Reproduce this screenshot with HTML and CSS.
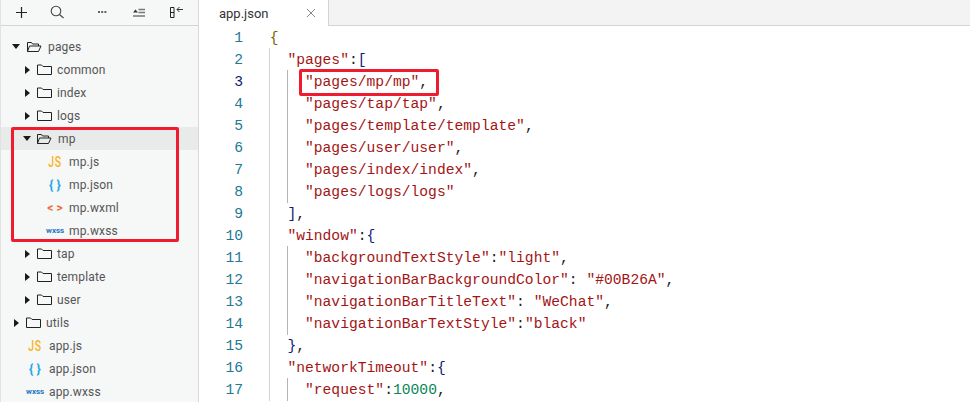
FILE: index.html
```html
<!DOCTYPE html>
<html lang="en">
<head>
<meta charset="utf-8">
<title>app.json</title>
<link rel="stylesheet" href="styles.css">
</head>
<body>
<div class="app">
  <aside class="sidebar">
    <div class="toolbar">
      <svg class="tool" width="36" height="25" viewBox="0 0 36 25"><path d="M20.500 7v11M15 12.500h11" fill="none" stroke="#222" stroke-width="1.200"/></svg>
      <svg class="tool" width="38" height="25" viewBox="0 0 38 25"><circle cx="19" cy="11" r="4.800" fill="none" stroke="#444" stroke-width="1.100"/><path d="M22.500 14.500l4 3.500" fill="none" stroke="#444" stroke-width="1.100"/></svg>
      <svg class="tool" width="44" height="25" viewBox="0 0 44 25"><path d="M23 12h2M26.200 12h2M29.400 12h2" fill="none" stroke="#333" stroke-width="1.600"/></svg>
      <svg class="tool" width="36" height="25" viewBox="0 0 36 25"><path d="M14 12.500l2.500-3 2.500 3z" fill="#333"/><path d="M19.500 9.500h6.500M19.500 12.500h6.500M14 16h12" fill="none" stroke="#777" stroke-width="1.400"/></svg>
      <svg class="tool" width="38" height="25" viewBox="0 0 38 25"><path d="M15.500 7.500h3.500v10h-3.500zM15.500 12.500h3.500" fill="none" stroke="#222" stroke-width="1"/><path d="M28 9.500h-6M24.500 7l-2.500 2.500 2.500 2.500" fill="none" stroke="#333" stroke-width="1"/></svg>
    </div>
    <ul class="tree">
      <li class="row d0"><i class="arrow down"></i><svg class="folder open" width="16" height="12" viewBox="0 0 16 12"><path d="M1.500 10.500v-9h4l1 1.500h6v2M1.500 10.500l2-5.500h11.500l-2.500 5.500z" fill="none" stroke="#222" stroke-width="1"/></svg><span class="label">pages</span></li>
      <li class="row d1"><i class="arrow right"></i><svg class="folder" width="15" height="12" viewBox="0 0 15 12"><path d="M.5 10.500v-9.500h4l1.500 1.500h8.500v8z" fill="none" stroke="#222" stroke-width="1"/></svg><span class="label">common</span></li>
      <li class="row d1"><i class="arrow right"></i><svg class="folder" width="15" height="12" viewBox="0 0 15 12"><path d="M.5 10.500v-9.500h4l1.500 1.500h8.500v8z" fill="none" stroke="#222" stroke-width="1"/></svg><span class="label">index</span></li>
      <li class="row d1"><i class="arrow right"></i><svg class="folder" width="15" height="12" viewBox="0 0 15 12"><path d="M.5 10.500v-9.500h4l1.500 1.500h8.500v8z" fill="none" stroke="#222" stroke-width="1"/></svg><span class="label">logs</span></li>
      <li class="row d1 selected"><i class="arrow down"></i><svg class="folder open" width="16" height="12" viewBox="0 0 16 12"><path d="M1.500 10.500v-9h4l1 1.500h6v2M1.500 10.500l2-5.500h11.500l-2.500 5.500z" fill="none" stroke="#222" stroke-width="1"/></svg><span class="label">mp</span></li>
      <li class="row f2"><span class="ficon js">JS</span><span class="label">mp.js</span></li>
      <li class="row f2"><span class="ficon json">{ }</span><span class="label">mp.json</span></li>
      <li class="row f2"><span class="ficon wxml">&lt; &gt;</span><span class="label">mp.wxml</span></li>
      <li class="row f2"><span class="ficon wxss">wxss</span><span class="label">mp.wxss</span></li>
      <li class="row d1"><i class="arrow right"></i><svg class="folder" width="15" height="12" viewBox="0 0 15 12"><path d="M.5 10.500v-9.500h4l1.500 1.500h8.500v8z" fill="none" stroke="#222" stroke-width="1"/></svg><span class="label">tap</span></li>
      <li class="row d1"><i class="arrow right"></i><svg class="folder" width="15" height="12" viewBox="0 0 15 12"><path d="M.5 10.500v-9.500h4l1.500 1.500h8.500v8z" fill="none" stroke="#222" stroke-width="1"/></svg><span class="label">template</span></li>
      <li class="row d1"><i class="arrow right"></i><svg class="folder" width="15" height="12" viewBox="0 0 15 12"><path d="M.5 10.500v-9.500h4l1.500 1.500h8.500v8z" fill="none" stroke="#222" stroke-width="1"/></svg><span class="label">user</span></li>
      <li class="row d0"><i class="arrow right"></i><svg class="folder" width="15" height="12" viewBox="0 0 15 12"><path d="M.5 10.500v-9.500h4l1.500 1.500h8.500v8z" fill="none" stroke="#222" stroke-width="1"/></svg><span class="label">utils</span></li>
      <li class="row f1"><span class="ficon js">JS</span><span class="label">app.js</span></li>
      <li class="row f1"><span class="ficon json">{ }</span><span class="label">app.json</span></li>
      <li class="row f1"><span class="ficon wxss">wxss</span><span class="label">app.wxss</span></li>
    </ul>
    <div class="redbox tree-box"></div>
  </aside>
  <main class="editor">
    <div class="tabs">
      <div class="tab"><span class="tab-name">app.json</span><svg width="10" height="10" viewBox="0 0 10 10"><path d="M1 1l8 8M9 1l-8 8" fill="none" stroke="#888" stroke-width="1"/></svg></div>
      <div class="tab-rest"></div>
    </div>
    <div class="code-area">
      <div class="gutter">
        <div>1</div><div>2</div><div class="active">3</div><div>4</div><div>5</div><div>6</div><div>7</div><div>8</div><div>9</div><div>10</div><div>11</div><div>12</div><div>13</div><div>14</div><div>15</div><div>16</div><div>17</div>
      </div>
      <div class="code">
        <div class="ln"><b class="b1">{</b></div>
        <div class="guide">
          <div class="ln"><s>"pages"</s>:<b class="b2">[</b></div>
          <div class="guide">
            <div class="ln"><s>"pages/mp/mp"</s>,</div>
            <div class="ln"><s>"pages/tap/tap"</s>,</div>
            <div class="ln"><s>"pages/template/template"</s>,</div>
            <div class="ln"><s>"pages/user/user"</s>,</div>
            <div class="ln"><s>"pages/index/index"</s>,</div>
            <div class="ln"><s>"pages/logs/logs"</s></div>
          </div>
          <div class="ln"><b class="b2">]</b>,</div>
          <div class="ln"><s>"window"</s>:<b class="b2">{</b></div>
          <div class="guide">
            <div class="ln"><s>"backgroundTextStyle"</s>:<s>"light"</s>,</div>
            <div class="ln"><s>"navigationBarBackgroundColor"</s>: <s>"#00B26A"</s>,</div>
            <div class="ln"><s>"navigationBarTitleText"</s>: <s>"WeChat"</s>,</div>
            <div class="ln"><s>"navigationBarTextStyle"</s>:<s>"black"</s></div>
          </div>
          <div class="ln"><b class="b2">}</b>,</div>
          <div class="ln"><s>"networkTimeout"</s>:<b class="b2">{</b></div>
          <div class="guide">
            <div class="ln"><s>"request"</s>:<em>10000</em>,</div>
          </div>
        </div>
      </div>
      <div class="redbox code-box"></div>
    </div>
  </main>
</div>
</body>
</html>
```

FILE: styles.css
```css
* { box-sizing: border-box; }
html, body { margin: 0; height: 100%; overflow: hidden; background: #fff; }
.app { display: flex; width: 970px; height: 402px; overflow: hidden; }

.sidebar {
  position: relative;
  width: 199px;
  flex: none;
  background: #f6f7f7;
  border-left: 1px solid #e2e2e2;
  border-right: 1px solid #d9d9d9;
  font: 12px Roboto, sans-serif;
  color: #555;
}
.toolbar {
  display: flex;
  height: 26px;
  border-bottom: 1px solid #d4d4d4;
}
.tool { display: block; flex: none; }
.tree { list-style: none; margin: 0; padding: 9px 0 0; }
.row { display: flex; align-items: center; height: 23px; }
.row.d0 { padding-left: 10px; }
.row.d1 { padding-left: 21px; }
.row.f2 { padding-left: 45px; }
.row.f1 { padding-left: 25px; }
.row.selected { background: #e9eaea; }
.arrow { display: block; flex: none; width: 0; height: 0; margin-right: 6px; }
.arrow.down { border-left: 4px solid transparent; border-right: 4px solid transparent; border-top: 5px solid #1a1a1a; margin-left: 1px; }
.row.d1 .arrow.down { margin-right: 5px; }
.arrow.right { border-top: 4px solid transparent; border-bottom: 4px solid transparent; border-left: 5px solid #1a1a1a; margin-left: 3px; margin-right: 7px; }
.folder { display: block; flex: none; margin-right: 5px; }
.folder.open { margin-right: 6px; }
.ficon { display: block; flex: none; width: 18px; margin-right: 5px; text-align: center; white-space: nowrap; }
.js { color: #fbb221; font-size: 14px; font-weight: 500; letter-spacing: 1px; transform: scaleX(.75); }
.json { color: #22a8e8; font-size: 13px; font-weight: 700; }
.wxml { color: #f26b3a; font-size: 12px; font-weight: 700; }
.wxss { color: #1f78c1; font-size: 8px; font-weight: 700; }
.label { white-space: nowrap; letter-spacing: .15px; }

.redbox {
  position: absolute;
  border: 3px solid #ee1c2e;
  border-radius: 2px;
}
.tree-box { left: 10px; top: 127px; width: 168px; height: 115px; }

.editor { flex: 1; min-width: 0; display: flex; flex-direction: column; }
.tabs { display: flex; height: 26px; flex: none; }
.tab {
  display: flex;
  align-items: center;
  width: 130px;
  padding-left: 20px;
  border-right: 1px solid #d4d4d4;
  font: 13px Roboto, sans-serif;
  color: #333;
}
.tab-name { width: 87px; }
.tab-rest { flex: 1; background: #f3f3f3; border-bottom: 1px solid #d4d4d4; }

.code-area {
  position: relative;
  flex: 1;
  display: flex;
  padding-top: 1px;
  font: 14.67px/22px "Liberation Mono", monospace;
}
.gutter { width: 44px; flex: none; text-align: right; color: #237893; }
.gutter .active { color: #0b216f; }
.code { margin-left: 26px; color: #222; }
.ln { height: 22px; padding-left: .8px; white-space: pre; }
.guide { padding-left: 17.600px; position: relative; }
.guide::before { content: ""; position: absolute; left: 0; top: -1px; bottom: 0; width: 1px; background: #d3d3d3; }
.guide > .guide::before { background: #b5b5b5; }
.ln s { text-decoration: none; color: #a31515; }
.ln em { font-style: normal; color: #098658; }
.ln b { font-weight: 400; }
.b1 { color: #7a5f00; }
.b2 { color: #0b216f; }
.code-box { left: 100px; top: 43px; width: 140px; height: 27px; }
```
